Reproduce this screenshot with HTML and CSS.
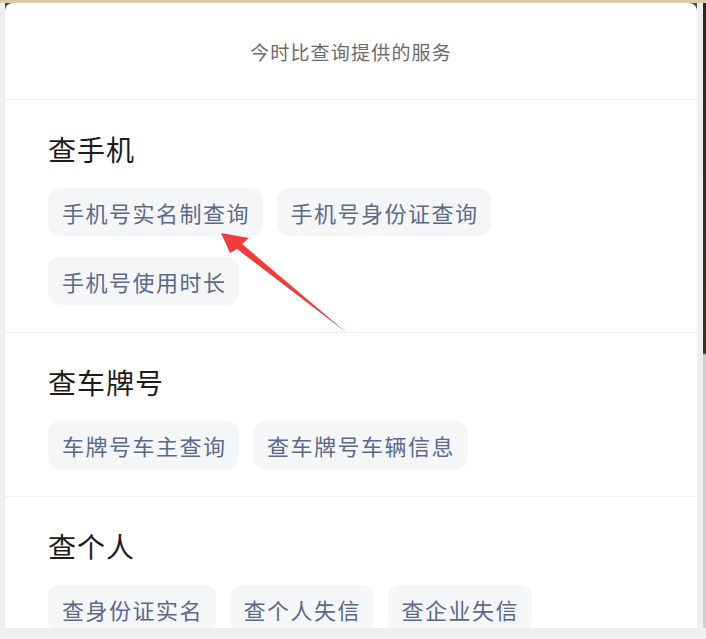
FILE: index.html
```html
<!DOCTYPE html>
<html lang="zh-CN">
<head>
<meta charset="utf-8">
<title>今时比查询提供的服务</title>
<link rel="stylesheet" href="styles.css">
</head>
<body>
<div class="page">
  <div class="topbar"></div>
  <div class="middle">
    <div class="side-left"></div>
    <div class="panel-wrap">
      <div class="panel">
        <div class="header">今时比查询提供的服务</div>
        <section class="section">
          <h2 class="heading">查手机</h2>
          <div class="chips">
            <span class="chip">手机号实名制查询</span>
            <span class="chip">手机号身份证查询</span>
            <span class="chip">手机号使用时长</span>
          </div>
        </section>
        <section class="section">
          <h2 class="heading">查车牌号</h2>
          <div class="chips">
            <span class="chip">车牌号车主查询</span>
            <span class="chip">查车牌号车辆信息</span>
          </div>
        </section>
        <section class="section">
          <h2 class="heading">查个人</h2>
          <div class="chips">
            <span class="chip">查身份证实名</span>
            <span class="chip">查个人失信</span>
            <span class="chip">查企业失信</span>
          </div>
        </section>
      </div>
    </div>
    <div class="side-right"></div>
    <div class="edge"></div>
  </div>
  <div class="bottombar"></div>
  <svg class="arrow" width="706" height="639" viewBox="0 0 706 639">
    <polygon points="221,233 249,238 242,244 347,333 237,249 230,253" fill="#f23b3b"/>
  </svg>
</div>
</body>
</html>
```
FILE: styles.css
```css
html, body {
  margin: 0;
  padding: 0;
  background: #efefef;
}
body {
  font-family: "Noto Sans CJK SC", "Noto Sans", sans-serif;
}
.page {
  position: relative;
  width: 706px;
  height: 639px;
  overflow: hidden;
  display: grid;
  grid-template-rows: 3px 625px 11px;
}
.topbar {
  background: #d8cda6;
}
.middle {
  display: flex;
  height: 625px;
}
.side-left {
  width: 5px;
  background: #efefef;
}
.side-right {
  width: 6px;
  background: #efefef;
}
.edge {
  width: 3px;
  background: linear-gradient(#2a2620 0, #3b3428 350px, #cfcfcf 352px, #cfcfcf 100%);
}
.panel-wrap {
  width: 692px;
  background: linear-gradient(#4a4a4a 0, #4a4a4a 12px, #ffffff 12px);
}
.panel {
  height: 625px;
  background: #ffffff;
  border-radius: 8px 8px 0 0;
  overflow: hidden;
}
.header {
  height: 96px;
  display: flex;
  align-items: center;
  justify-content: center;
  font-size: 19px;
  letter-spacing: 1.2px;
  color: #6b6b6b;
  border-bottom: 1px solid #f0f0f0;
}
.section {
  padding: 31px 43px 27px 43px;
  border-bottom: 1px solid #f0f0f0;
}
.heading {
  margin: 0 0 21px 0;
  font-size: 28px;
  line-height: 36px;
  font-weight: 400;
  letter-spacing: 1px;
  color: #1c1c1c;
}
.chips {
  display: flex;
  flex-wrap: wrap;
  gap: 21px 14px;
}
.chip {
  height: 48px;
  line-height: 48px;
  padding: 0 12.5px 0 14px;
  border-radius: 12px;
  background: #f5f6f8;
  color: #5a6a8c;
  font-size: 22px;
  letter-spacing: 1.5px;
}
.bottombar {
  background: #efefef;
}
.arrow {
  position: absolute;
  left: 0;
  top: 0;
  pointer-events: none;
}
```
